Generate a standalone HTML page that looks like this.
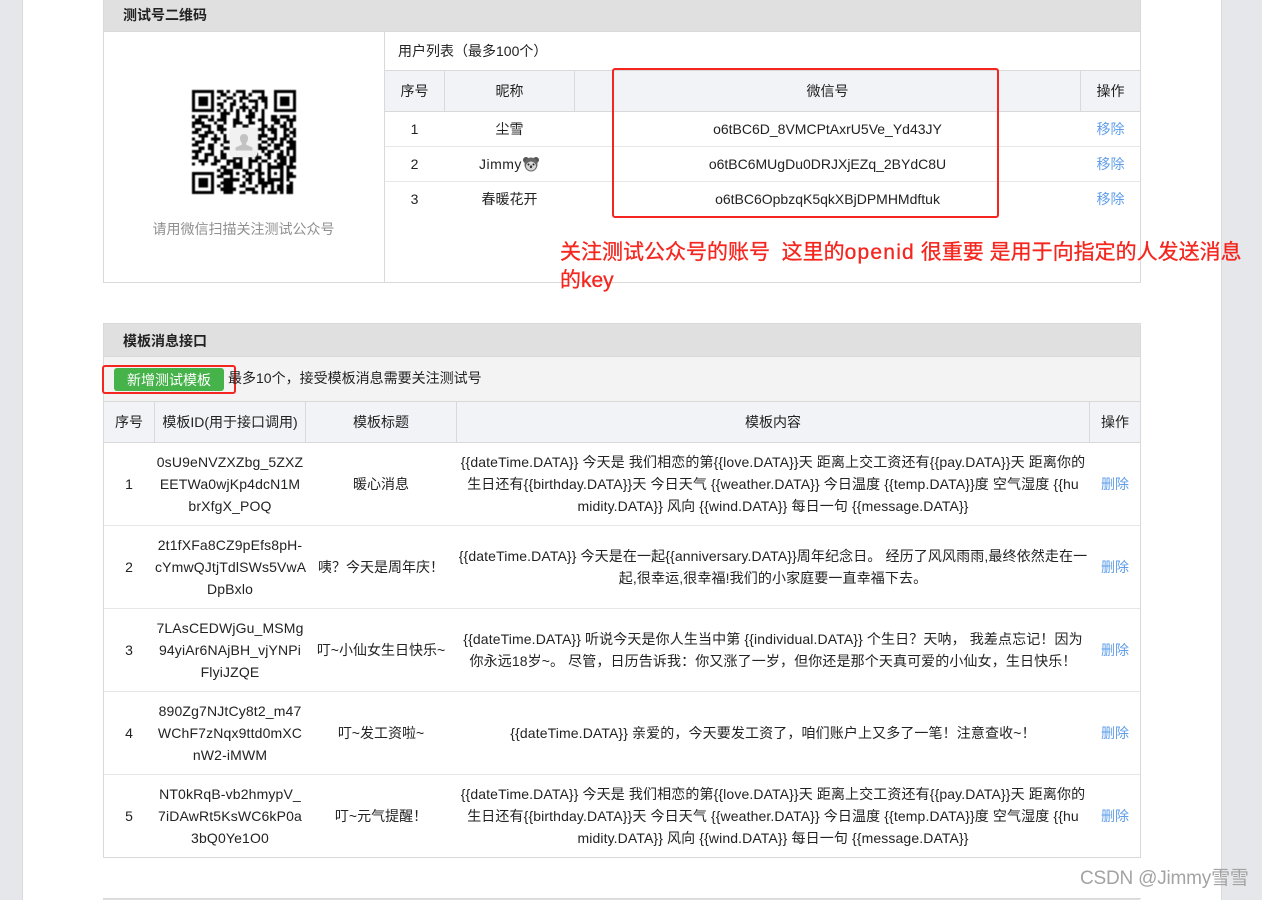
<!DOCTYPE html>
<html lang="zh-CN">
<head>
<meta charset="utf-8">
<title>测试号管理</title>
<style>
html,body{margin:0;padding:0;width:1262px;height:900px;overflow:hidden;background:#e6e7eb}
body{position:relative;font-family:"Liberation Sans","Noto Sans CJK SC",sans-serif;font-size:14px;color:#222}
.a{position:absolute}
.t{position:absolute;height:22px;line-height:22px;text-align:center;white-space:nowrap}
.b{position:absolute;background:#d9d9d9}
.l{position:absolute;background:#e7e7e7;height:1px}
.link{color:#5f9de8}
.id{letter-spacing:.15px}
.c{letter-spacing:.12px}
</style>
</head>
<body>
<div class="a" style="left:22px;top:0;width:1200px;height:900px;background:#fff"></div>
<div class="b" style="left:22px;top:0;width:1px;height:900px"></div>
<div class="b" style="left:1221px;top:0;width:1px;height:900px"></div>

<!-- panel 1 -->
<div class="a" style="left:103px;top:0;width:1037px;height:31px;background:#e0e0e0"></div>
<div class="t" style="left:123px;top:4px;font-weight:bold;color:#222">测试号二维码</div>
<div class="b" style="left:103px;top:31px;width:1038px;height:1px"></div>
<div class="b" style="left:103px;top:0;width:1px;height:283px"></div>
<div class="b" style="left:1140px;top:0;width:1px;height:283px"></div>
<div class="b" style="left:103px;top:282px;width:1038px;height:1px"></div>
<div class="b" style="left:384px;top:32px;width:1px;height:250px"></div>

<svg class="a" style="left:192px;top:90px;filter:blur(.45px)" width="104" height="104" viewBox="0 0 33 33" shape-rendering="crispEdges">
<g fill="none" stroke="#000" stroke-width="1">
<path d="M.5.5h6v6h-6zM26.5.5h6v6h-6zM.5 26.5h6v6h-6zM24.500 24.500h4v4h-4z"/>
<path d="M8 .5h2m1 0h1m2 0h3m2 0h4M9 1.500h2m2 0h1m2 0h1m1 0h1m3 0h1M8 2.500h1m2 0h2m2 0h3m3 0h3M10 3.500h1m2 0h1m1 0h1m2 0h3m1 0h2M8 4.500h2m2 0h2m2 0h1m3 0h1m2 0h1M9 5.500h1m2 0h1m2 0h3m1 0h2m2 0h1M8 6.500h1m1 0h1m1 0h1m1 0h1m1 0h1m1 0h1m1 0h1m1 0h1M9 7.500h3m2 0h1m3 0h2m2 0h1"/>
<path d="M0 8.500h1m1 0h3m1 0h1m2 0h2m3 0h1m2 0h3m2 0h1m2 0h2m1 0h3m1 0h1M1 9.500h2m2 0h2m1 0h3m2 0h2m3 0h1m2 0h2m2 0h3m2 0h3M0 10.500h4m3 0h1m2 0h1m2 0h3m2 0h2m2 0h1m3 0h2m1 0h1m1 0h1M0 11.500h1m2 0h3m2 0h2m3 0h1m2 0h2m4 0h2m1 0h1m2 0h2m1 0h1"/>
<path d="M1 12.500h2m2 0h1m2 0h3M21 12.500h2m1 0h3m2 0h2m1 0h1M0 13.500h2m2 0h3m2 0h1M22 13.500h1m2 0h2m2 0h1m1 0h3M2 14.500h3m2 0h1m2 0h1M21 14.500h3m2 0h1m2 0h2m1 0h1M0 15.500h1m2 0h1m2 0h3m1 0h1M21 15.500h1m2 0h3m1 0h2m1 0h1M1 16.500h3m3 0h1m2 0h2M22 16.500h2m1 0h1m2 0h1m1 0h3M0 17.500h2m3 0h2m2 0h1M21 17.500h1m2 0h1m1 0h3m2 0h2M2 18.500h2m1 0h2m3 0h2M21 18.500h3m2 0h2m2 0h3M0 19.500h3m3 0h1m2 0h1M22 19.500h1m1 0h2m2 0h1m1 0h1m1 0h1"/>
<path d="M1 20.500h1m2 0h3m2 0h2m2 0h1m2 0h1m2 0h2m2 0h2m2 0h2m1 0h1m1 0h1M0 21.500h2m2 0h1m2 0h1m1 0h2m2 0h3m2 0h1m1 0h2m2 0h1m2 0h3m1 0h2M2 22.500h3m2 0h2m2 0h3m1 0h1m2 0h3m1 0h2m2 0h1m1 0h2m1 0h2M0 23.500h1m2 0h1m2 0h2m3 0h1m1 0h3m2 0h1m2 0h1m2 0h1m2 0h3m1 0h1"/>
<path d="M9 24.500h2m2 0h3m2 0h1m2 0h1M30 24.500h3M8 25.500h1m1 0h3m3 0h2m2 0h2M30 25.500h1M9 26.500h4m1 0h1m2 0h3m1 0h2M30 26.500h2M8 27.500h2m2 0h1m3 0h1m1 0h1m2 0h1M30 27.500h3M10 28.500h5m2 0h2m2 0h2M30 28.500h1M9 29.500h4m3 0h1m1 0h1m2 0h5m2 0h1m2 0h1M8 30.500h1m1 0h3m2 0h2m3 0h1m1 0h2m1 0h1m1 0h2m1 0h2M9 31.500h5m3 0h3m2 0h1m2 0h1m1 0h2m1 0h2M10 32.500h3m2 0h2m2 0h2m1 0h1m1 0h3m1 0h1m1 0h2"/>
</g>
<path d="M2 2h3v3h-3zM28 2h3v3h-3zM2 28h3v3h-3zM26 26h1v1h-1z" fill="#000"/>
</svg>
<div class="a" style="left:230px;top:128px;width:27px;height:29px;background:#f1f1f1;border-radius:3px;box-shadow:0 0 2px #ddd"></div>
<svg class="a" style="left:235px;top:134px" width="18" height="17" viewBox="0 0 18 17"><path d="M9 0C6.300 0 4.800 2 5 4.700c.1 1.800.9 3.300 1.800 4.200v1.800L.5 13.500V16.500h17v-3l-6.300-2.800V8.900c.9-.9 1.700-2.400 1.800-4.200C13.200 2 11.700 0 9 0z" fill="#c2c2c2"/></svg>
<div class="t" style="left:123px;width:241px;top:218px;color:#8f8f8f">请用微信扫描关注测试公众号</div>

<div class="t" style="left:398px;top:40px">用户列表（最多100个）</div>
<div class="a" style="left:385px;top:70px;width:755px;height:41px;background:#f2f3f7"></div>
<div class="b" style="left:385px;top:70px;width:755px;height:1px"></div>
<div class="b" style="left:385px;top:111px;width:755px;height:1px"></div>
<div class="b" style="left:444px;top:70px;width:1px;height:41px"></div>
<div class="b" style="left:574px;top:70px;width:1px;height:41px"></div>
<div class="b" style="left:1080px;top:70px;width:1px;height:41px"></div>
<div class="l" style="left:385px;top:146px;width:755px"></div>
<div class="l" style="left:385px;top:181px;width:755px"></div>

<div class="t" style="left:385px;width:59px;top:80px">序号</div>
<div class="t" style="left:445px;width:129px;top:80px">昵称</div>
<div class="t" style="left:575px;width:505px;top:80px">微信号</div>
<div class="t" style="left:1081px;width:59px;top:80px">操作</div>

<div class="t" style="left:385px;width:59px;top:118px">1</div>
<div class="t" style="left:445px;width:129px;top:118px">尘雪</div>
<div class="t" style="left:575px;width:505px;top:118px">o6tBC6D_8VMCPtAxrU5Ve_Yd43JY</div>
<div class="t link" style="left:1081px;width:59px;top:118px">移除</div>

<div class="t" style="left:385px;width:59px;top:153px">2</div>
<div class="t" style="left:479px;top:153px;letter-spacing:.5px">Jimmy</div>
<svg class="a" style="left:523px;top:156px" width="16" height="16" viewBox="0 0 16 16"><circle cx="3" cy="4" r="3" fill="#555"/><circle cx="13" cy="4" r="3" fill="#555"/><ellipse cx="8" cy="8.500" rx="6.500" ry="7" fill="#666"/><ellipse cx="8" cy="10" rx="5" ry="4.500" fill="#d8d8d8"/><circle cx="5.500" cy="8.500" r="1" fill="#222"/><circle cx="10.500" cy="8.500" r="1" fill="#222"/><ellipse cx="8" cy="10.800" rx="1.200" ry="1.400" fill="#333"/></svg>
<div class="t" style="left:575px;width:505px;top:153px">o6tBC6MUgDu0DRJXjEZq_2BYdC8U</div>
<div class="t link" style="left:1081px;width:59px;top:153px">移除</div>

<div class="t" style="left:385px;width:59px;top:188px">3</div>
<div class="t" style="left:445px;width:129px;top:188px">春暖花开</div>
<div class="t" style="left:575px;width:505px;top:188px">o6tBC6OpbzqK5qkXBjDPMHMdftuk</div>
<div class="t link" style="left:1081px;width:59px;top:188px">移除</div>

<div class="a" style="left:612px;top:68px;width:383px;height:146px;border:2px solid #f5261f;border-radius:3px"></div>
<div class="a" style="left:560px;top:239px;width:700px;font-size:21px;line-height:28px;color:#f5261f;white-space:nowrap;-webkit-text-stroke:.3px #f5261f">关注测试公众号的账号&nbsp; 这里的<span style="letter-spacing:1.2px">openid</span> 很重要 是用于向指定的人发送消息<br>的key</div>

<!-- panel 2 -->
<div class="a" style="left:103px;top:323px;width:1037px;height:33px;background:#e0e0e0;border-radius:3px 3px 0 0"></div>
<div class="b" style="left:103px;top:323px;width:1038px;height:1px"></div>
<div class="t" style="left:123px;top:330px;font-weight:bold">模板消息接口</div>
<div class="b" style="left:103px;top:356px;width:1038px;height:1px"></div>
<div class="a" style="left:103px;top:357px;width:1037px;height:44px;background:#f3f3f3"></div>
<div class="b" style="left:103px;top:323px;width:1px;height:534px"></div>
<div class="b" style="left:1140px;top:323px;width:1px;height:534px"></div>
<div class="b" style="left:103px;top:857px;width:1038px;height:1px"></div>

<div class="a" style="left:114px;top:368px;width:110px;height:23px;background:#45b24a;border-radius:3px"></div>
<div class="t" style="left:114px;width:110px;top:369px;color:#fff">新增测试模板</div>
<div class="a" style="left:102px;top:365px;width:130px;height:25px;border:2px solid #f5261f;border-radius:3px"></div>
<div class="t" style="left:228px;top:367px;color:#222">最多10个，接受模板消息需要关注测试号</div>

<div class="a" style="left:104px;top:402px;width:1036px;height:40px;background:#f2f3f7"></div>
<div class="b" style="left:104px;top:401px;width:1036px;height:1px"></div>
<div class="b" style="left:104px;top:442px;width:1036px;height:1px"></div>
<div class="b" style="left:154px;top:402px;width:1px;height:40px"></div>
<div class="b" style="left:305px;top:402px;width:1px;height:40px"></div>
<div class="b" style="left:456px;top:402px;width:1px;height:40px"></div>
<div class="b" style="left:1089px;top:402px;width:1px;height:40px"></div>
<div class="t" style="left:104px;width:50px;top:411px">序号</div>
<div class="t" style="left:155px;width:150px;top:411px">模板ID(用于接口调用)</div>
<div class="t" style="left:306px;width:150px;top:411px">模板标题</div>
<div class="t" style="left:457px;width:632px;top:411px">模板内容</div>
<div class="t" style="left:1090px;width:50px;top:411px">操作</div>
<div class="l" style="left:104px;top:525px;width:1036px"></div>
<div class="l" style="left:104px;top:608px;width:1036px"></div>
<div class="l" style="left:104px;top:691px;width:1036px"></div>
<div class="l" style="left:104px;top:774px;width:1036px"></div>

<!-- row 1 -->
<div class="t" style="left:104px;width:50px;top:473px">1</div>
<div class="t id" style="left:155px;width:150px;top:451px">0sU9eNVZXZbg_5ZXZ</div>
<div class="t id" style="left:155px;width:150px;top:473px">EETWa0wjKp4dcN1M</div>
<div class="t id" style="left:155px;width:150px;top:495px">brXfgX_POQ</div>
<div class="t" style="left:306px;width:150px;top:473px">暖心消息</div>
<div class="t c" style="left:457px;width:632px;top:451px">{{dateTime.DATA}} 今天是 我们相恋的第{{love.DATA}}天 距离上交工资还有{{pay.DATA}}天 距离你的</div>
<div class="t c" style="left:457px;width:632px;top:473px">生日还有{{birthday.DATA}}天 今日天气 {{weather.DATA}} 今日温度 {{temp.DATA}}度 空气湿度 {{hu</div>
<div class="t c" style="left:457px;width:632px;top:495px">midity.DATA}} 风向 {{wind.DATA}} 每日一句 {{message.DATA}}</div>
<div class="t link" style="left:1090px;width:50px;top:473px">删除</div>

<!-- row 2 -->
<div class="t" style="left:104px;width:50px;top:556px">2</div>
<div class="t id" style="left:155px;width:150px;top:534px">2t1fXFa8CZ9pEfs8pH-</div>
<div class="t id" style="left:155px;width:150px;top:556px">cYmwQJtjTdlSWs5VwA</div>
<div class="t id" style="left:155px;width:150px;top:578px">DpBxlo</div>
<div class="t" style="left:306px;width:150px;top:556px">咦？今天是周年庆！</div>
<div class="t c" style="left:457px;width:632px;top:545px">{{dateTime.DATA}} 今天是在一起{{anniversary.DATA}}周年纪念日。 经历了风风雨雨,最终依然走在一</div>
<div class="t c" style="left:457px;width:632px;top:567px">起,很幸运,很幸福!我们的小家庭要一直幸福下去。</div>
<div class="t link" style="left:1090px;width:50px;top:556px">删除</div>

<!-- row 3 -->
<div class="t" style="left:104px;width:50px;top:639px">3</div>
<div class="t id" style="left:155px;width:150px;top:617px">7LAsCEDWjGu_MSMg</div>
<div class="t id" style="left:155px;width:150px;top:639px">94yiAr6NAjBH_vjYNPi</div>
<div class="t id" style="left:155px;width:150px;top:661px">FlyiJZQE</div>
<div class="t" style="left:306px;width:150px;top:639px">叮~小仙女生日快乐~</div>
<div class="t c" style="left:457px;width:632px;top:628px">{{dateTime.DATA}} 听说今天是你人生当中第 {{individual.DATA}} 个生日？天呐， 我差点忘记！因为</div>
<div class="t c" style="left:457px;width:632px;top:650px">你永远18岁~。 尽管，日历告诉我：你又涨了一岁，但你还是那个天真可爱的小仙女，生日快乐！</div>
<div class="t link" style="left:1090px;width:50px;top:639px">删除</div>

<!-- row 4 -->
<div class="t" style="left:104px;width:50px;top:722px">4</div>
<div class="t id" style="left:155px;width:150px;top:700px">890Zg7NJtCy8t2_m47</div>
<div class="t id" style="left:155px;width:150px;top:722px">WChF7zNqx9ttd0mXC</div>
<div class="t id" style="left:155px;width:150px;top:744px">nW2-iMWM</div>
<div class="t" style="left:306px;width:150px;top:722px">叮~发工资啦~</div>
<div class="t c" style="left:457px;width:632px;top:722px">{{dateTime.DATA}} 亲爱的，今天要发工资了，咱们账户上又多了一笔！注意查收~！</div>
<div class="t link" style="left:1090px;width:50px;top:722px">删除</div>

<!-- row 5 -->
<div class="t" style="left:104px;width:50px;top:805px">5</div>
<div class="t id" style="left:155px;width:150px;top:783px">NT0kRqB-vb2hmypV_</div>
<div class="t id" style="left:155px;width:150px;top:805px">7iDAwRt5KsWC6kP0a</div>
<div class="t id" style="left:155px;width:150px;top:827px">3bQ0Ye1O0</div>
<div class="t" style="left:306px;width:150px;top:805px">叮~元气提醒！</div>
<div class="t c" style="left:457px;width:632px;top:783px">{{dateTime.DATA}} 今天是 我们相恋的第{{love.DATA}}天 距离上交工资还有{{pay.DATA}}天 距离你的</div>
<div class="t c" style="left:457px;width:632px;top:805px">生日还有{{birthday.DATA}}天 今日天气 {{weather.DATA}} 今日温度 {{temp.DATA}}度 空气湿度 {{hu</div>
<div class="t c" style="left:457px;width:632px;top:827px">midity.DATA}} 风向 {{wind.DATA}} 每日一句 {{message.DATA}}</div>
<div class="t link" style="left:1090px;width:50px;top:805px">删除</div>

<!-- next panel -->
<div class="b" style="left:103px;top:898px;width:1038px;height:1px"></div>
<div class="a" style="left:103px;top:899px;width:1037px;height:1px;background:#e0e0e0"></div>

<div class="t" style="left:1080px;top:868px;font-size:19px;letter-spacing:-.2px;color:#a3a3a3">CSDN @Jimmy雪雪</div>
</body>
</html>
